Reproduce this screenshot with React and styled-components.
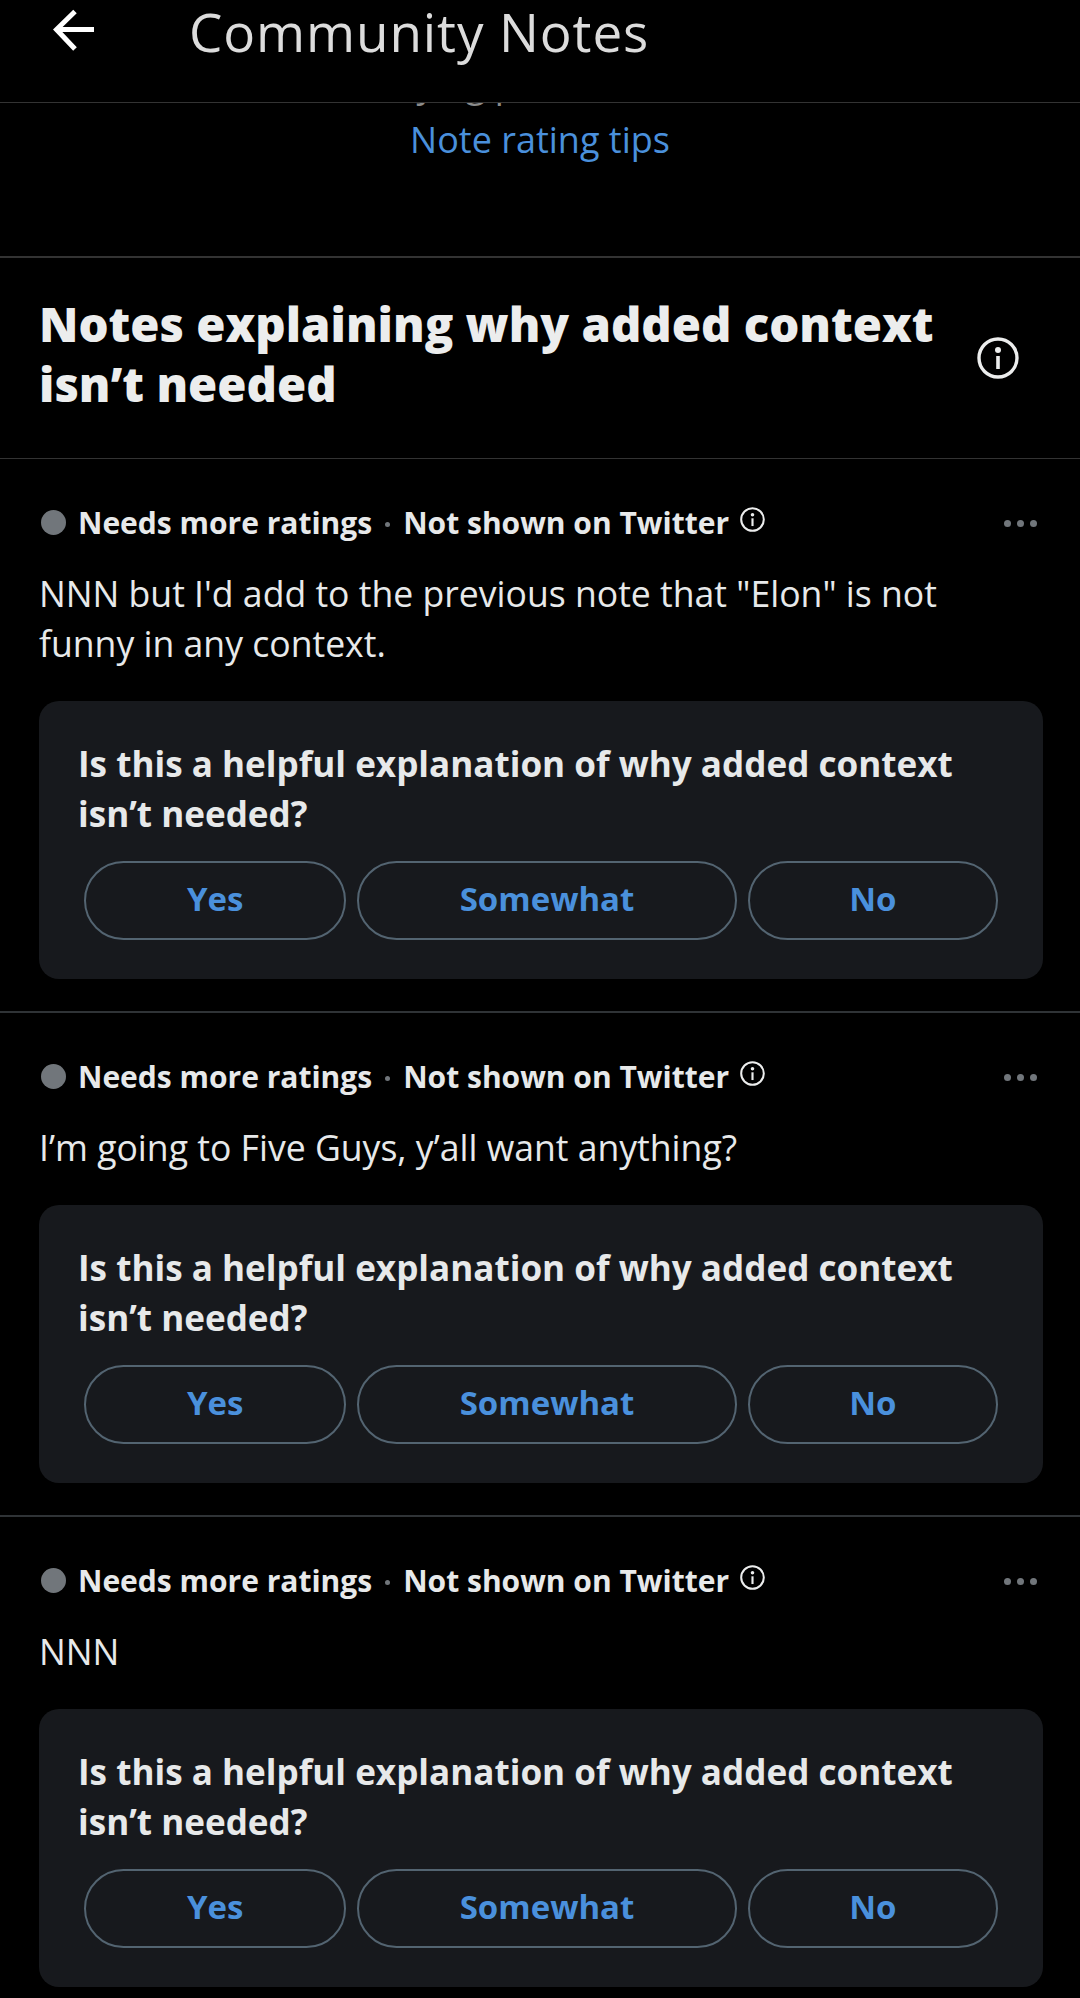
import React from "react";
import styled, { createGlobalStyle } from "styled-components";

const notes = [
  `NNN but I'd add to the previous note that "Elon" is not funny in any context.`,
  "I’m going to Five Guys, y’all want anything?",
  "NNN",
];

const App = () => {
  return (
    <>
      <GlobalStyle />
      <Page>
        <Header>
          <BackIcon viewBox="0 0 42 42">
            <path d="M41 20.5H5M22 2.5L3.5 20.5L22 40" />
          </BackIcon>
          <Title>Community Notes</Title>
        </Header>
        <Tips>
          <ClippedLine>Take a look at verifying posts on the whole site here.</ClippedLine>
          <TipsLink>Note rating tips</TipsLink>
        </Tips>
        <SectionHead>
          <Heading>Notes explaining why added context isn’t needed</Heading>
          <InfoIcon size={42} />
        </SectionHead>
        {notes.map((text) => (
          <Note key={text}>
            <Status>
              <Dot />
              <StatusText>Needs more ratings</StatusText>
              <Sep />
              <StatusText>Not shown on Twitter</StatusText>
              <SmallInfo>
                <InfoIcon size={25} />
              </SmallInfo>
              <More>
                <i />
                <i />
                <i />
              </More>
            </Status>
            <NoteText>{text}</NoteText>
            <RateCard>
              <Question>Is this a helpful explanation of why added context isn’t needed?</Question>
              <Buttons>
                <RateButton>Yes</RateButton>
                <RateButton>Somewhat</RateButton>
                <RateButton>No</RateButton>
              </Buttons>
            </RateCard>
          </Note>
        ))}
      </Page>
    </>
  );
};

const InfoIcon = ({ size }) => (
  <InfoSvg viewBox="0 0 42 42" width={size} height={size}>
    <circle cx="21" cy="21" r="19" fill="none" stroke="currentColor" strokeWidth="3.4" />
    <circle cx="21" cy="13" r="3" fill="currentColor" />
    <rect x="19.2" y="19" width="3.6" height="13" fill="currentColor" />
  </InfoSvg>
);

export default App;

const GlobalStyle = createGlobalStyle`
  html, body {
    margin: 0;
    background: #000;
  }
  * {
    box-sizing: border-box;
  }
`;

const Page = styled.div`
  width: 1080px;
  height: 1998px;
  overflow: hidden;
  background: #000;
  color: #e7e9ea;
  font-family: "Open Sans", "Noto Sans", sans-serif;
`;

const Header = styled.header`
  height: 103px;
  display: flex;
  align-items: flex-start;
  border-bottom: 1px solid #333;
  background: #000;
  padding-left: 53px;
`;

const BackIcon = styled.svg`
  width: 42px;
  height: 42px;
  margin-top: 9px;
  fill: none;
  stroke: #fff;
  stroke-width: 5;
`;

const Title = styled.h1`
  margin: 0 0 0 94px;
  font-size: 53px;
  line-height: 64px;
  font-weight: 500;
  color: #dcdcdc;
  letter-spacing: 0.9px;
`;

const Tips = styled.section`
  height: 155px;
  overflow: hidden;
  border-bottom: 2px solid #333;
  text-align: center;
`;

const ClippedLine = styled.div`
  margin-top: -44px;
  height: 50px;
  font-size: 36px;
  line-height: 50px;
  color: #8b8b8b;
  white-space: nowrap;
`;

const TipsLink = styled.div`
  font-size: 36px;
  line-height: 50px;
  color: #4a90dc;
  margin-top: 6px;
`;

const SectionHead = styled.section`
  height: 201px;
  display: flex;
  align-items: center;
  justify-content: space-between;
  padding: 0 61px 0 39px;
  border-bottom: 1px solid #333;
`;

const Heading = styled.h2`
  margin: 0 0 8px;
  width: 920px;
  font-size: 47.3px;
  line-height: 60px;
  font-weight: 800;
  color: #eceded;
`;

const InfoSvg = styled.svg`
  display: block;
  flex: none;
  color: #eceded;
`;

const Note = styled.article`
  padding: 40px 37px 32px 39px;
  border-bottom: 2px solid #2f3336;
`;

const Status = styled.div`
  height: 46px;
  display: flex;
  align-items: center;
`;

const Dot = styled.span`
  width: 25px;
  height: 25px;
  margin: 0 12px 0 2px;
  border-radius: 50%;
  background: #71767b;
`;

const StatusText = styled.span`
  font-size: 30px;
  font-weight: 700;
  color: #e7e9ea;
`;

const Sep = styled.span`
  width: 5px;
  height: 5px;
  margin: 4px 13px 0;
  border-radius: 50%;
  background: #71767b;
`;

const SmallInfo = styled.span`
  margin: -6px 0 0 11px;
`;

const More = styled.span`
  margin: 2px 6px 0 auto;
  display: flex;
  gap: 6px;

  i {
    width: 7px;
    height: 7px;
    border-radius: 50%;
    background: #71767b;
  }
`;

const NoteText = styled.p`
  margin: 23px 0 33px;
  width: 960px;
  font-size: 35.6px;
  line-height: 50px;
  color: #e7e9ea;
`;

const RateCard = styled.div`
  height: 278px;
  padding: 37px 45px 0 39px;
  border-radius: 20px;
  background: #17191d;
`;

const Question = styled.div`
  font-size: 35.1px;
  line-height: 50px;
  font-weight: 700;
  color: #e7e9ea;
`;

const Buttons = styled.div`
  margin: 23px 0 0 6px;
  display: grid;
  grid-template-columns: 262fr 379fr 250fr;
  gap: 11px;
`;

const RateButton = styled.button`
  height: 79px;
  padding: 0 0 5px;
  border: 2px solid #536471;
  border-radius: 40px;
  background: transparent;
  font-family: inherit;
  font-size: 33px;
  font-weight: 700;
  color: #4a90dc;
`;
